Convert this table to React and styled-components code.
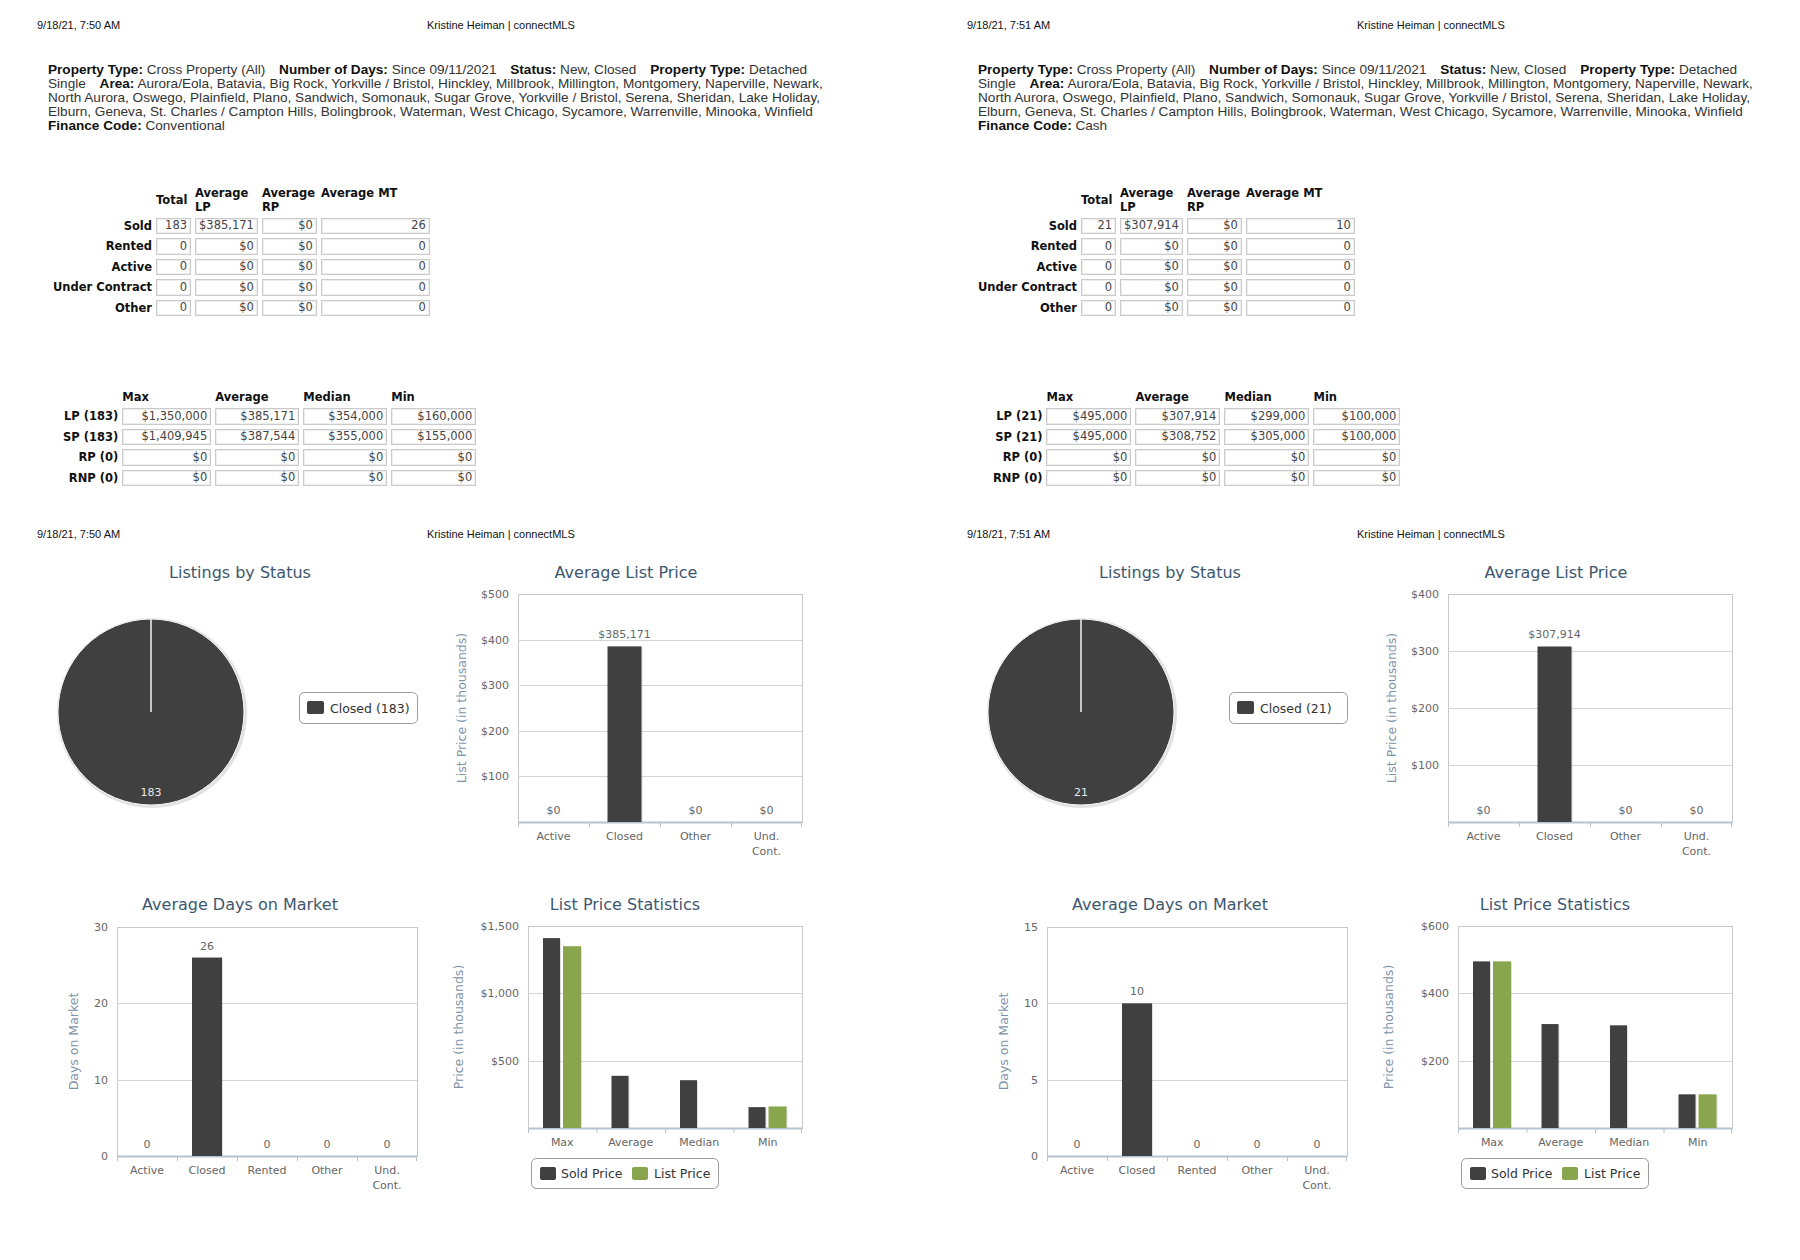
import React from 'react';
import styled, { createGlobalStyle } from 'styled-components';

const GlobalStyle = createGlobalStyle`
  body {
    margin: 0;
    background: #fff;
  }
`;

const CHART_FONT = '"DejaVu Sans", Verdana, sans-serif';
const DARK = '#404040';
const GREEN = '#89A54E';

const Sheet = styled.div`
  display: flex;
  width: 1800px;
  overflow: hidden;
`;

const Page = styled.section`
  flex: none;
  width: 930px;
  display: flex;
  flex-direction: column;
  align-items: flex-start;
`;

const PrintHeader = styled.div`
  display: grid;
  grid-template-columns: 390px auto;
  margin-top: ${p => p.$top}px;
  padding-left: 37px;
  font-family: "Liberation Sans", Arial, sans-serif;
  font-size: 11px;
  line-height: 12px;
  color: #111;
`;

const Criteria = styled.div`
  margin: 32px 0 0 48px;
  width: 790px;
  font-family: "Liberation Sans", Arial, sans-serif;
  font-size: 13.6px;
  line-height: 13.9px;
  color: #333;
  b {
    color: #111;
  }
`;

const CritItem = styled.span`
  margin-right: 10px;
`;

const StatTable = styled.table`
  border-collapse: separate;
  border-spacing: 4px 4px;
  margin: ${p => p.$top}px 0 0 ${p => p.$left}px;
  font-family: "DejaVu Sans", Verdana, sans-serif;
  font-size: 11.5px;
`;

const RowLabel = styled.th`
  padding: 0;
  text-align: right;
  font-weight: bold;
  color: #111;
  white-space: nowrap;
`;

const ColHead = styled.th`
  padding: 0;
  text-align: left;
  vertical-align: ${p => p.$valign || 'top'};
  font-weight: bold;
  line-height: 14px;
  color: #111;
`;

const Cell = styled.td`
  box-sizing: border-box;
  width: ${p => p.$w}px;
  height: ${p => p.$h}px;
  padding: 0 3px;
  border: 1px solid #cbcbcb;
  box-shadow: inset 0 0 0 1px #eeeeee;
  text-align: right;
  line-height: 1;
  color: #444;
`;

const ChartGrid = styled.div`
  display: grid;
  grid-template-columns: 390px 390px;
  grid-template-rows: 332px 330px;
  column-gap: 5px;
  margin-top: 13px;
  padding-left: 45px;
`;

const ChartSvg = styled.svg`
  display: block;
  overflow: visible;
`;

const ChartTitle = styled.text`
  font-family: ${CHART_FONT};
  font-size: 16px;
  fill: #3e576f;
  text-anchor: middle;
`;

const AxisText = styled.text`
  font-family: ${CHART_FONT};
  font-size: 11px;
  fill: #666;
  text-anchor: ${p => p.$anchor || 'middle'};
`;

const AxisTitle = styled.text`
  font-family: ${CHART_FONT};
  font-size: 12.5px;
  fill: #7d93a9;
  text-anchor: middle;
`;

const LegendText = styled.text`
  font-family: ${CHART_FONT};
  font-size: 12.5px;
  fill: #333;
`;

const SliceLabel = styled.text`
  font-family: ${CHART_FONT};
  font-size: 11px;
  fill: #e8e8e8;
  text-anchor: middle;
`;

function StatsTable({ heads, rows, widths, h, top, left, headAlign }) {
  return (
    <StatTable $top={top} $left={left}>
      <thead>
        <tr>
          <th />
          {heads.map((t, i) => (
            <ColHead key={i} $valign={headAlign && headAlign[i]}>{t}</ColHead>
          ))}
        </tr>
      </thead>
      <tbody>
        {rows.map(r => (
          <tr key={r[0]}>
            <RowLabel>{r[0]}</RowLabel>
            {r.slice(1).map((v, i) => (
              <Cell key={i} $w={widths[i]} $h={h}>{v}</Cell>
            ))}
          </tr>
        ))}
      </tbody>
    </StatTable>
  );
}

function Axes({ plot, max, ticks, cats, yTitle, yTitleX }) {
  const bottom = plot.y + plot.h;
  const cw = plot.w / cats.length;
  const yOf = v => bottom - (v / max) * plot.h;
  return (
    <g>
      <rect x={plot.x + 0.5} y={plot.y + 0.5} width={plot.w} height={plot.h} fill="none" stroke="#c8c8c8" />
      {ticks.filter(t => t.v > 0 && t.v < max).map(t => (
        <line key={t.v} x1={plot.x} x2={plot.x + plot.w} y1={Math.round(yOf(t.v)) + 0.5} y2={Math.round(yOf(t.v)) + 0.5} stroke="#d4d4d4" />
      ))}
      {ticks.filter(t => t.label).map(t => (
        <AxisText key={t.v} $anchor="end" x={plot.x - 9} y={yOf(t.v) + 4}>{t.label}</AxisText>
      ))}
      <line x1={plot.x} x2={plot.x + plot.w} y1={bottom + 0.5} y2={bottom + 0.5} stroke="#b7c3cf" strokeWidth="2" />
      {cats.map((_, i) => (
        <line key={i} x1={plot.x + i * cw + 0.5} x2={plot.x + i * cw + 0.5} y1={bottom} y2={bottom + 5} stroke="#b7c3cf" />
      ))}
      <line x1={plot.x + plot.w - 0.5} x2={plot.x + plot.w - 0.5} y1={bottom} y2={bottom + 5} stroke="#b7c3cf" />
      {cats.map((c, i) => {
        const lines = Array.isArray(c) ? c : [c];
        return lines.map((l, j) => (
          <AxisText key={i + '-' + j} x={plot.x + (i + 0.5) * cw} y={bottom + 18 + j * 15}>{l}</AxisText>
        ));
      })}
      <AxisTitle x={yTitleX} y={plot.y + plot.h / 2} transform={`rotate(-90 ${yTitleX} ${plot.y + plot.h / 2})`}>
        {yTitle}
      </AxisTitle>
    </g>
  );
}

function PieChart({ count }) {
  const cx = 106;
  const cy = 159;
  return (
    <ChartSvg width="390" height="330">
      <ChartTitle x="195" y="25">Listings by Status</ChartTitle>
      <circle cx={cx + 1} cy={cy + 1} r="95" fill="#e2e2e2" />
      <circle cx={cx} cy={cy} r="93" fill={DARK} stroke="#fafafa" strokeWidth="1" />
      <line x1={cx} y1={cy} x2={cx} y2={cy - 93} stroke="#f4f4f4" strokeWidth="1.5" />
      <SliceLabel x={cx} y={cy + 84}>{count}</SliceLabel>
      <rect x="254.5" y="139.5" width="118" height="31" rx="5" fill="#fff" stroke="#9a9a9a" />
      <rect x="262" y="148" width="17" height="13" rx="2" fill={DARK} />
      <LegendText x="285" y="159.5">Closed ({count})</LegendText>
    </ChartSvg>
  );
}

function SingleColumnChart({ title, titleX, plot, max, ticks, cats, values, labels, barW, yTitle, yTitleX }) {
  const bottom = plot.y + plot.h;
  const cw = plot.w / cats.length;
  return (
    <ChartSvg width="390" height="330">
      <ChartTitle x={titleX} y="25">{title}</ChartTitle>
      <Axes plot={plot} max={max} ticks={ticks} cats={cats} yTitle={yTitle} yTitleX={yTitleX} />
      {values.map((v, i) => {
        const h = (v / max) * plot.h;
        const x = plot.x + (i + 0.5) * cw - barW / 2;
        return (
          <g key={i}>
            {v > 0 && <rect x={x + 1} y={bottom - h + 1} width={barW} height={h - 1} fill="#000" opacity="0.12" />}
            {v > 0 && <rect x={x} y={bottom - h} width={barW} height={h} fill={DARK} />}
            <AxisText x={plot.x + (i + 0.5) * cw} y={bottom - h - 8}>{labels[i]}</AxisText>
          </g>
        );
      })}
    </ChartSvg>
  );
}

function StatsChart({ plot, max, ticks, sold, list }) {
  const bottom = plot.y + plot.h;
  const cw = plot.w / 4;
  const bar = (v, x, w, color, key) => {
    if (v == null) return null;
    const h = (v / max) * plot.h;
    return (
      <g key={key}>
        <rect x={x + 1} y={bottom - h + 1} width={w} height={h - 1} fill="#000" opacity="0.12" />
        <rect x={x} y={bottom - h} width={w} height={h} fill={color} />
      </g>
    );
  };
  return (
    <ChartSvg width="390" height="330">
      <ChartTitle x="185" y="25">List Price Statistics</ChartTitle>
      <Axes plot={plot} max={max} ticks={ticks} cats={['Max', 'Average', 'Median', 'Min']} yTitle="Price (in thousands)" yTitleX={23} />
      {sold.map((v, i) => bar(v, plot.x + i * cw + 15, 17, DARK, 's' + i))}
      {list.map((v, i) => bar(v, plot.x + i * cw + 35, 18, GREEN, 'l' + i))}
      <rect x="91.5" y="273.5" width="187" height="30" rx="5" fill="#fff" stroke="#9a9a9a" />
      <rect x="100" y="282" width="16" height="13" rx="2" fill={DARK} />
      <LegendText x="121" y="293">Sold Price</LegendText>
      <rect x="192" y="282" width="16" height="13" rx="2" fill={GREEN} />
      <LegendText x="214" y="293">List Price</LegendText>
    </ChartSvg>
  );
}

const priceTicks = (step, max) => {
  const out = [];
  for (let v = step; v <= max; v += step) out.push({ v, label: '$' + v.toLocaleString('en-US') });
  return out;
};
const plainTicks = (step, max) => {
  const out = [];
  for (let v = 0; v <= max; v += step) out.push({ v, label: String(v) });
  return out;
};

const pages = [
  {
    time: '9/18/21, 7:50 AM',
    finance: 'Conventional',
    indent: 49,
    sold: ['Sold', '183', '$385,171', '$0', '26'],
    lp: ['LP (183)', '$1,350,000', '$385,171', '$354,000', '$160,000'],
    sp: ['SP (183)', '$1,409,945', '$387,544', '$355,000', '$155,000'],
    priceWidths: [89, 84, 84, 85],
    count: 183,
    avgMax: 500,
    avgValue: 385.171,
    avgLabel: '$385,171',
    domMax: 30,
    domStep: 10,
    dom: 26,
    statMax: 1500,
    statStep: 500,
    statSold: [1409.945, 387.544, 355, 155],
    statList: [1350, null, null, 160],
  },
  {
    time: '9/18/21, 7:51 AM',
    finance: 'Cash',
    indent: 44,
    sold: ['Sold', '21', '$307,914', '$0', '10'],
    lp: ['LP (21)', '$495,000', '$307,914', '$299,000', '$100,000'],
    sp: ['SP (21)', '$495,000', '$308,752', '$305,000', '$100,000'],
    priceWidths: [85, 85, 85, 87],
    count: 21,
    avgMax: 400,
    avgValue: 307.914,
    avgLabel: '$307,914',
    domMax: 15,
    domStep: 5,
    dom: 10,
    statMax: 600,
    statStep: 200,
    statSold: [495, 308.752, 305, 100],
    statList: [495, null, null, 100],
  },
];

const AREAS =
  'Aurora/Eola, Batavia, Big Rock, Yorkville / Bristol, Hinckley, Millbrook, Millington, Montgomery, Naperville, Newark, North Aurora, Oswego, Plainfield, Plano, Sandwich, Somonauk, Sugar Grove, Yorkville / Bristol, Serena, Sheridan, Lake Holiday, Elburn, Geneva, St. Charles / Campton Hills, Bolingbrook, Waterman, West Chicago, Sycamore, Warrenville, Minooka, Winfield';

function ReportPage({ d }) {
  const zeroRow = label => [label, '0', '$0', '$0', '0'];
  return (
    <Page>
      <PrintHeader $top={19}>
        <span>{d.time}</span>
        <span>Kristine Heiman | connectMLS</span>
      </PrintHeader>
      <Criteria>
        <CritItem><b>Property Type:</b> Cross Property (All)</CritItem>{' '}
        <CritItem><b>Number of Days:</b> Since 09/11/2021</CritItem>{' '}
        <CritItem><b>Status:</b> New, Closed</CritItem>{' '}
        <CritItem><b>Property Type:</b> Detached Single</CritItem>{' '}
        <span><b>Area:</b> {AREAS}</span>
        <div><b>Finance Code:</b> {d.finance}</div>
      </Criteria>
      <StatsTable
        top={49}
        left={d.indent}
        h={16.5}
        widths={[35, 60, 55, 109]}
        heads={['Total', 'Average LP', 'Average RP', 'Average MT']}
        headAlign={['middle', 'top', 'top', 'top']}
        rows={[d.sold, zeroRow('Rented'), zeroRow('Active'), zeroRow('Under Contract'), zeroRow('Other')]}
      />
      <StatsTable
        top={66}
        left={59}
        h={16.5}
        widths={d.priceWidths}
        heads={['Max', 'Average', 'Median', 'Min']}
        rows={[
          d.lp,
          d.sp,
          ['RP (0)', '$0', '$0', '$0', '$0'],
          ['RNP (0)', '$0', '$0', '$0', '$0'],
        ]}
      />
      <PrintHeader $top={38}>
        <span>{d.time}</span>
        <span>Kristine Heiman | connectMLS</span>
      </PrintHeader>
      <ChartGrid>
        <PieChart count={d.count} />
        <SingleColumnChart
          title="Average List Price"
          titleX={186}
          plot={{ x: 78, y: 41, w: 284, h: 228 }}
          max={d.avgMax}
          ticks={priceTicks(100, d.avgMax)}
          cats={['Active', 'Closed', 'Other', ['Und.', 'Cont.']]}
          values={[0, d.avgValue, 0, 0]}
          labels={['$0', d.avgLabel, '$0', '$0']}
          barW={34}
          yTitle="List Price (in thousands)"
          yTitleX={26}
        />
        <SingleColumnChart
          title="Average Days on Market"
          titleX={195}
          plot={{ x: 72, y: 42, w: 300, h: 229 }}
          max={d.domMax}
          ticks={plainTicks(d.domStep, d.domMax)}
          cats={['Active', 'Closed', 'Rented', 'Other', ['Und.', 'Cont.']]}
          values={[0, d.dom, 0, 0, 0]}
          labels={['0', String(d.dom), '0', '0', '0']}
          barW={30}
          yTitle="Days on Market"
          yTitleX={33}
        />
        <StatsChart
          plot={{ x: 88, y: 41, w: 274, h: 202 }}
          max={d.statMax}
          ticks={priceTicks(d.statStep, d.statMax)}
          sold={d.statSold}
          list={d.statList}
        />
      </ChartGrid>
    </Page>
  );
}

export default function App() {
  return (
    <>
      <GlobalStyle />
      <Sheet>
        {pages.map(p => (
          <ReportPage key={p.time} d={p} />
        ))}
      </Sheet>
    </>
  );
}
